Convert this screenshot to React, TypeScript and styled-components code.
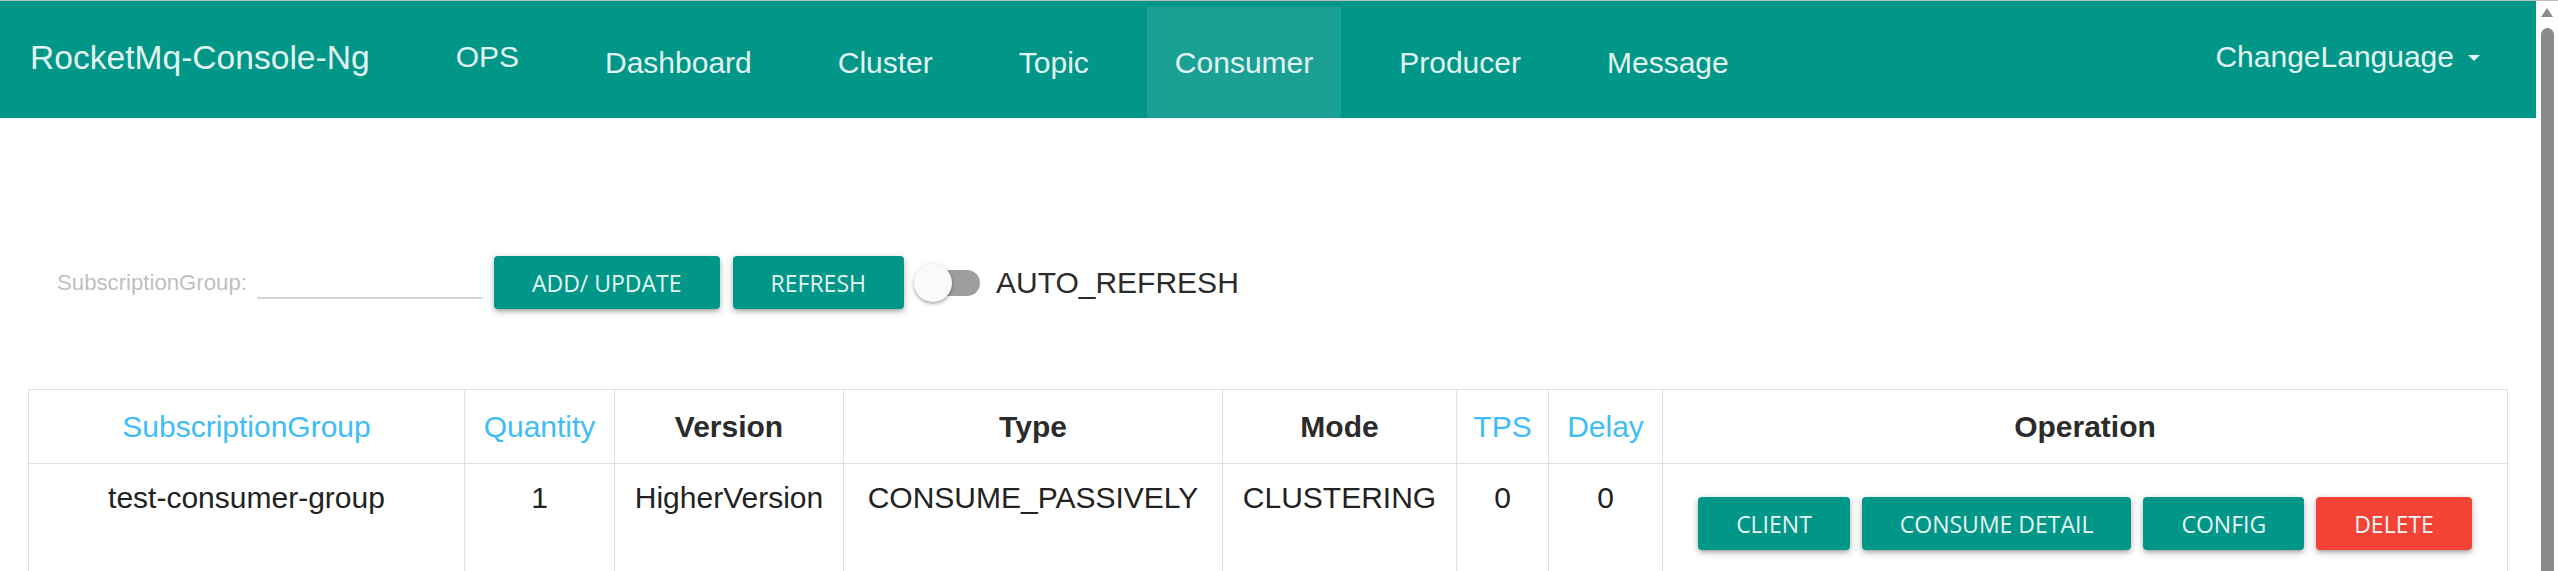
import styled, { createGlobalStyle } from "styled-components";

const GlobalStyle = createGlobalStyle`
	html, body {
		margin: 0;
		padding: 0;
		overflow: hidden;
		background: #fff;
	}
	body {
		font-family: "Liberation Sans", Arial, sans-serif;
	}
	* {
		box-sizing: border-box;
	}
`;

const navItems = [
	{ label: "OPS", lift: true },
	{ label: "Dashboard" },
	{ label: "Cluster" },
	{ label: "Topic" },
	{ label: "Consumer", active: true },
	{ label: "Producer" },
	{ label: "Message" },
];

const columns = [
	{ title: "SubscriptionGroup", sortable: true, width: 436 },
	{ title: "Quantity", sortable: true, width: 150 },
	{ title: "Version", width: 229 },
	{ title: "Type", width: 379 },
	{ title: "Mode", width: 234 },
	{ title: "TPS", sortable: true, width: 92 },
	{ title: "Delay", sortable: true, width: 114 },
	{ title: "Operation" },
];

const rows = [
	{
		group: "test-consumer-group",
		quantity: 1,
		version: "HigherVersion",
		type: "CONSUME_PASSIVELY",
		mode: "CLUSTERING",
		tps: 0,
		delay: 0,
	},
];

const App = () => {
	return (
		<Page>
			<GlobalStyle />
			<Viewport>
				<NavBar>
					<Brand>RocketMq-Console-Ng</Brand>
					<NavList>
						{navItems.map((item) => (
							<NavLink key={item.label} $active={item.active} $lift={item.lift}>
								{item.label}
							</NavLink>
						))}
					</NavList>
					<NavLink $lift $right>
						ChangeLanguage
						<Caret />
					</NavLink>
				</NavBar>

				<Main>
					<FilterBar>
						<FilterLabel>SubscriptionGroup:</FilterLabel>
						<FilterInput type="text" />
						<Button $ml={11}>ADD/ UPDATE</Button>
						<Button $ml={13}>REFRESH</Button>
						<Switch>
							<SwitchTrack />
							<SwitchKnob />
						</Switch>
						<SwitchLabel>AUTO_REFRESH</SwitchLabel>
					</FilterBar>

					<Table>
						<colgroup>
							{columns.map((c) => (
								<col key={c.title} style={c.width ? { width: c.width } : undefined} />
							))}
						</colgroup>
						<thead>
							<tr>
								{columns.map((c) => (
									<Th key={c.title} $sortable={c.sortable}>
										{c.title}
									</Th>
								))}
							</tr>
						</thead>
						<tbody>
							{rows.map((r) => (
								<tr key={r.group}>
									<Td>{r.group}</Td>
									<Td>{r.quantity}</Td>
									<Td>{r.version}</Td>
									<Td>{r.type}</Td>
									<Td>{r.mode}</Td>
									<Td>{r.tps}</Td>
									<Td>{r.delay}</Td>
									<Td>
										<ButtonGroup>
											<Button>CLIENT</Button>
											<Button>CONSUME DETAIL</Button>
											<Button>CONFIG</Button>
											<Button $danger>DELETE</Button>
										</ButtonGroup>
									</Td>
								</tr>
							))}
						</tbody>
					</Table>
				</Main>
			</Viewport>

			<ScrollBar>
				<ScrollArrow />
				<ScrollThumb />
			</ScrollBar>
		</Page>
	);
};

export default App;

const Page = styled.div`
	display: flex;
	height: 571px;
	border-top: 1px solid #bdbdbd;
	background: #fff;
`;

const Viewport = styled.div`
	flex: 1;
	min-width: 0;
	overflow: hidden;
`;

const NavBar = styled.nav`
	display: flex;
	height: 117px;
	padding: 0 28px 0 30px;
	background-color: #009688;
	color: #e2f4f1;
`;

const Brand = styled.div`
	display: flex;
	align-items: center;
	padding-bottom: 4px;
	font-size: 33.6px;
	white-space: nowrap;
`;

const NavList = styled.div`
	display: flex;
	gap: 30px;
	margin-left: 58px;
`;

const NavLink = styled.a<{ $active?: boolean; $lift?: boolean; $right?: boolean }>`
	display: flex;
	align-items: center;
	gap: 14px;
	margin-top: 6px;
	margin-left: ${(p) => (p.$right ? "auto" : "0")};
	padding: 0 28px ${(p) => (p.$lift ? "11px" : "0")};
	font-size: 30px;
	white-space: nowrap;
	cursor: pointer;
	background-color: ${(p) => (p.$active ? "rgba(255, 255, 255, 0.1)" : "transparent")};
`;

const Caret = styled.span`
	width: 0;
	height: 0;
	margin-top: 2px;
	border-left: 6.5px solid transparent;
	border-right: 6.5px solid transparent;
	border-top: 6px solid #e2f4f1;
`;

const Main = styled.main`
	padding: 0 28px;
`;

const FilterBar = styled.div`
	display: flex;
	align-items: center;
	height: 53px;
	margin-top: 138px;
	padding-left: 29px;
`;

const FilterLabel = styled.label`
	font-size: 22.2px;
	color: #bfbfbf;
`;

const FilterInput = styled.input`
	width: 226px;
	height: 33px;
	margin-left: 10px;
	border: none;
	border-bottom: 2px solid #d4d4d4;
	outline: none;
	background: transparent;
	font-size: 22px;
`;

const Button = styled.button<{ $danger?: boolean; $ml?: number }>`
	height: 53px;
	margin-left: ${(p) => p.$ml ?? 0}px;
	padding: 0 38px;
	border: none;
	border-radius: 4px;
	background-color: ${(p) => (p.$danger ? "#f44336" : "#009688")};
	color: #e6f5f2;
	font-family: "Open Sans", "Noto Sans", sans-serif;
	font-size: 23px;
	white-space: nowrap;
	box-shadow: 0 3px 4px 0 rgba(0, 0, 0, 0.14), 0 4px 2px -3px rgba(0, 0, 0, 0.12),
		0 2px 8px 0 rgba(0, 0, 0, 0.2);
	cursor: pointer;
`;

const Switch = styled.div`
	position: relative;
	width: 66px;
	height: 38px;
	margin-left: 10px;
`;

const SwitchTrack = styled.span`
	position: absolute;
	left: 4px;
	top: 6px;
	width: 62px;
	height: 26px;
	border-radius: 13px;
	background-color: #9e9e9e;
`;

const SwitchKnob = styled.span`
	position: absolute;
	left: 0;
	top: 0;
	width: 38px;
	height: 38px;
	border-radius: 50%;
	background-color: #fafafa;
	box-shadow: 0 2px 3px 0 rgba(0, 0, 0, 0.25), 0 1px 6px 0 rgba(0, 0, 0, 0.12);
`;

const SwitchLabel = styled.span`
	margin-left: 16px;
	font-size: 30px;
	color: #2b2b2b;
`;

const Table = styled.table`
	width: 100%;
	margin-top: 80px;
	border-collapse: collapse;
	table-layout: fixed;
	border: 1px solid #e0e0e0;
`;

const Th = styled.th<{ $sortable?: boolean }>`
	padding: 19px 0;
	border: 1px solid #e0e0e0;
	line-height: 35px;
	font-size: 30px;
	font-weight: ${(p) => (p.$sortable ? "normal" : "bold")};
	color: ${(p) => (p.$sortable ? "#40bcf6" : "#2b2b2b")};
	text-align: center;
	white-space: nowrap;
`;

const Td = styled.td`
	padding: 16px 0;
	border: 1px solid #e0e0e0;
	line-height: 35px;
	font-size: 30px;
	color: #222;
	text-align: center;
	vertical-align: top;
	white-space: nowrap;
`;

const ButtonGroup = styled.div`
	display: flex;
	justify-content: center;
	gap: 12px;
	margin: 17px 0;
`;

const ScrollBar = styled.div`
	display: flex;
	flex-direction: column;
	align-items: center;
	width: 22px;
	padding-top: 7px;
	background-color: #fff;
`;

const ScrollArrow = styled.span`
	width: 0;
	height: 0;
	border-left: 6.5px solid transparent;
	border-right: 6.5px solid transparent;
	border-bottom: 9px solid #8c8c8c;
`;

const ScrollThumb = styled.span`
	flex: 1;
	width: 13px;
	margin-top: 11px;
	border-radius: 7px 7px 0 0;
	background-color: #8a8a8a;
`;
